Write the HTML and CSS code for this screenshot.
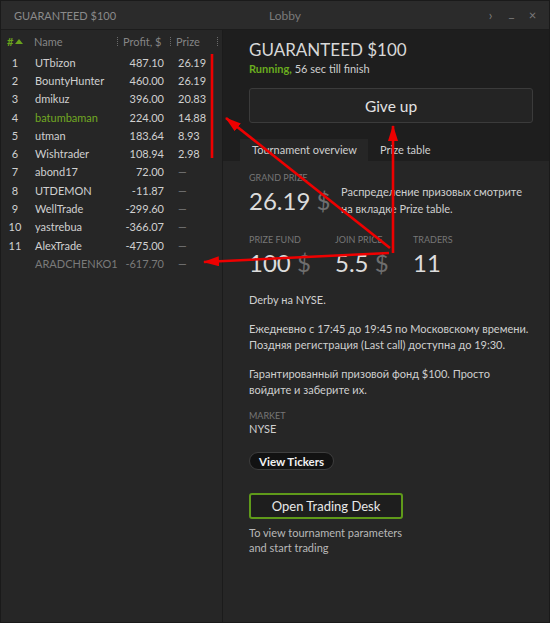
FILE: index.html
```html
<!DOCTYPE html>
<html>
<head>
<meta charset="utf-8">
<link rel="stylesheet" href="styles.css">
</head>
<body>
<div class="window">
  <div class="titlebar">
    <div class="tb-title">GUARANTEED $100</div>
    <div class="tb-lobby">Lobby</div>
    <div class="tb-controls">
      <span class="ctl">&#8250;</span>
      <span class="ctl min">_</span>
      <span class="ctl">&#215;</span>
    </div>
  </div>
  <div class="main">
    <div class="left">
      <div class="thead">
        <div class="h-num"><span class="hash">#</span><svg class="tri" width="8" height="5" viewBox="0 0 8 5"><path d="M0 5 L4 0 L8 5 Z" fill="#6aa31d"/></svg></div>
        <div class="h-name">Name</div><span class="sep"></span>
        <div class="h-profit">Profit, $</div><span class="sep"></span>
        <div class="h-prize">Prize</div><span class="sep"></span>
      </div>
      <div class="rows">
        <div class="row"><span class="c-num">1</span><span class="c-name">UTbizon</span><span class="c-profit">487.10</span><span class="c-prize">26.19</span></div>
        <div class="row"><span class="c-num">2</span><span class="c-name">BountyHunter</span><span class="c-profit">460.00</span><span class="c-prize">26.19</span></div>
        <div class="row"><span class="c-num">3</span><span class="c-name">dmikuz</span><span class="c-profit">396.00</span><span class="c-prize">20.83</span></div>
        <div class="row"><span class="c-num">4</span><span class="c-name me">batumbaman</span><span class="c-profit">224.00</span><span class="c-prize">14.88</span></div>
        <div class="row"><span class="c-num">5</span><span class="c-name">utman</span><span class="c-profit">183.64</span><span class="c-prize">8.93</span></div>
        <div class="row"><span class="c-num">6</span><span class="c-name">Wishtrader</span><span class="c-profit">108.94</span><span class="c-prize">2.98</span></div>
        <div class="row"><span class="c-num">7</span><span class="c-name">abond17</span><span class="c-profit">72.00</span><span class="c-prize dash">—</span></div>
        <div class="row"><span class="c-num">8</span><span class="c-name">UTDEMON</span><span class="c-profit">-11.87</span><span class="c-prize dash">—</span></div>
        <div class="row"><span class="c-num">9</span><span class="c-name">WellTrade</span><span class="c-profit">-299.60</span><span class="c-prize dash">—</span></div>
        <div class="row"><span class="c-num">10</span><span class="c-name">yastrebua</span><span class="c-profit">-366.07</span><span class="c-prize dash">—</span></div>
        <div class="row"><span class="c-num">11</span><span class="c-name">AlexTrade</span><span class="c-profit">-475.00</span><span class="c-prize dash">—</span></div>
        <div class="row out"><span class="c-num"></span><span class="c-name">ARADCHENKO1</span><span class="c-profit">-617.70</span><span class="c-prize dash">—</span></div>
      </div>
    </div>
    <div class="right">
      <div class="r-head">
        <div class="r-title">GUARANTEED $100</div>
        <div class="r-status"><span class="running">Running,</span> 56 sec till finish</div>
        <div class="giveup">Give up</div>
        <div class="tabs">
          <div class="tab active">Tournament overview</div>
          <div class="tab">Prize table</div>
        </div>
      </div>
      <div class="content">
        <div class="grand">
          <div class="stat">
            <div class="label">Grand prize</div>
            <div class="value">26.19 <span class="cur">$</span></div>
          </div>
          <div class="grand-desc">Распределение призовых смотрите<br>на вкладке Prize table.</div>
        </div>
        <div class="stats">
          <div class="stat s1">
            <div class="label">Prize fund</div>
            <div class="value">100 <span class="cur">$</span></div>
          </div>
          <div class="stat s2">
            <div class="label">Join price</div>
            <div class="value">5.5 <span class="cur">$</span></div>
          </div>
          <div class="stat">
            <div class="label">Traders</div>
            <div class="value">11</div>
          </div>
        </div>
        <p class="p1">Derby на NYSE.</p>
        <p class="p2">Ежедневно с 17:45 до 19:45 по Московскому времени.<br>Поздняя регистрация (Last call) доступна до 19:30.</p>
        <p class="p2">Гарантированный призовой фонд $100. Просто<br>войдите и заберите их.</p>
        <div class="label market">Market</div>
        <div class="market-val">NYSE</div>
        <div class="tickers">View Tickers</div>
        <div class="desk">Open Trading Desk</div>
        <div class="desk-note">To view tournament parameters<br>and start trading</div>
      </div>
    </div>
  </div>
  <svg class="annot" width="550" height="623" viewBox="0 0 550 623">
    <defs>
      <marker id="ah" markerUnits="userSpaceOnUse" markerWidth="16" markerHeight="10" refX="15" refY="5" orient="auto">
        <path d="M0 0 L16 5 L0 10 Z" fill="#ee0000"/>
      </marker>
    </defs>
    <g stroke="#ee0000" stroke-width="2.6" fill="none">
      <line x1="212" y1="54" x2="212" y2="158"/>
      <line x1="390" y1="248" x2="226" y2="118" marker-end="url(#ah)"/>
      <line x1="393" y1="253" x2="393" y2="126" marker-end="url(#ah)"/>
      <line x1="389" y1="253" x2="204" y2="262" marker-end="url(#ah)"/>
    </g>
  </svg>
</div>
</body>
</html>
```

FILE: styles.css
```css
* { box-sizing: border-box; }
html, body { margin: 0; padding: 0; }
body {
  width: 550px;
  height: 623px;
  overflow: hidden;
  background: #252525;
  font-family: Lato, "Noto Sans", sans-serif;
  color: #d4d4d4;
}
.window {
  position: relative;
  width: 550px;
  height: 623px;
  display: flex;
  flex-direction: column;
  border: 1px solid #1a1a1a;
}
.titlebar {
  height: 29px;
  flex: none;
  display: flex;
  align-items: center;
  background: #2b2b2b;
  border-bottom: 1px solid #1c1c1c;
  font-size: 11px;
  color: #8a8a8a;
}
.tb-title { width: 268px; padding-left: 13px; }
.tb-lobby { flex: 1; color: #7a7a7a; font-size: 12px; }
.tb-controls { display: flex; gap: 12px; padding-right: 12px; color: #7a7a7a; font-size: 13px; align-items: center; }
.ctl { width: 9px; text-align: center; }
.ctl.min { position: relative; top: -3px; }

.main { flex: 1; display: flex; min-height: 0; }
.left {
  width: 222px;
  flex: none;
  background: #262626;
  border-right: 1px solid #1b1b1b;
  font-size: 11px;
}
.thead {
  height: 23px;
  display: flex;
  align-items: center;
  color: #858585;
}
.h-num { width: 28px; padding-left: 6px; display: flex; align-items: center; gap: 2px; }
.hash { color: #6aa31d; font-weight: bold; font-size: 11px; }
.tri { margin-top: -1px; }
.h-name { width: 88px; padding-left: 5px; }
.h-profit { width: 52px; padding-left: 5px; }
.h-prize { width: 46px; padding-left: 5px; }
.sep { width: 1px; height: 9px; border-left: 1px dotted #6a6a6a; }

.row {
  height: 18.3px;
  display: flex;
  align-items: center;
  color: #d0d0d0;
}
.c-num { width: 28px; text-align: center; }
.c-name { width: 86px; padding-left: 6px; white-space: nowrap; }
.c-name.me { color: #72a823; }
.c-profit { width: 49px; text-align: right; white-space: nowrap; }
.c-prize { width: 56px; padding-left: 14px; }
.dash { color: #7a7a7a; }
.row.out { color: #7a7a7a; }

.right { flex: 1; display: flex; flex-direction: column; background: #262626; }
.r-head { background: #1e1e1e; padding: 9px 16px 0 26px; }
.r-title { font-size: 17px; line-height: 22px; color: #d8d8d8; }
.r-status { font-size: 11px; line-height: 16px; color: #cfcfcf; margin-top: 0px; }
.running { color: #6aac1e; font-weight: bold; }
.giveup {
  margin-top: 11px;
  height: 35px;
  border: 1px solid #3b3b3b;
  border-radius: 3px;
  background: #242424;
  display: flex;
  align-items: center;
  justify-content: center;
  font-size: 15.5px;
  color: #e2e2e2;
}
.tabs { margin-top: 16px; margin-left: -9px; display: flex; height: 22px; }
.tab { padding: 0 12px; font-size: 11px; line-height: 22px; color: #cfcfcf; white-space: nowrap; }
.tab.active { background: #262626; width: 128px; }

.content { padding: 11px 16px 0 26px; font-size: 11px; color: #cfcfcf; }
.label { font-size: 9px; line-height: 12px; text-transform: uppercase; color: #767676; }
.value { font-size: 24px; line-height: 30px; color: #dcdcdc; margin-top: 2px; white-space: nowrap; }
.cur { color: #6e6e6e; }
.grand { display: flex; align-items: flex-start; }
.grand .stat { width: 92px; }
.grand-desc { margin-top: 11px; line-height: 17px; white-space: nowrap; }
.stats { display: flex; margin-top: 17px; }
.s1 { width: 86px; }
.s2 { width: 78px; }
p { margin: 0; line-height: 16px; white-space: nowrap; }
.p1 { margin-top: 14px; }
.p2 { margin-top: 13px; }
.market { margin-top: 12px; }
.market-val { line-height: 13px; margin-top: 0; }
.tickers {
  margin-top: 17px;
  width: 85px;
  height: 18px;
  border-radius: 9px;
  border: 1px solid #3e3e3e;
  background: #121212;
  color: #f2f2f2;
  font-weight: bold;
  font-size: 11.5px;
  display: flex;
  align-items: center;
  justify-content: center;
}
.desk {
  margin-top: 23px;
  width: 154px;
  height: 26px;
  border: 2px solid #5f9a1a;
  border-radius: 3px;
  background: #1e1e1e;
  color: #e8e8e8;
  font-size: 13px;
  display: flex;
  align-items: center;
  justify-content: center;
}
.desk-note { margin-top: 6px; line-height: 15px; color: #b8b8b8; }

.annot { position: absolute; left: -1px; top: -1px; pointer-events: none; }
```
